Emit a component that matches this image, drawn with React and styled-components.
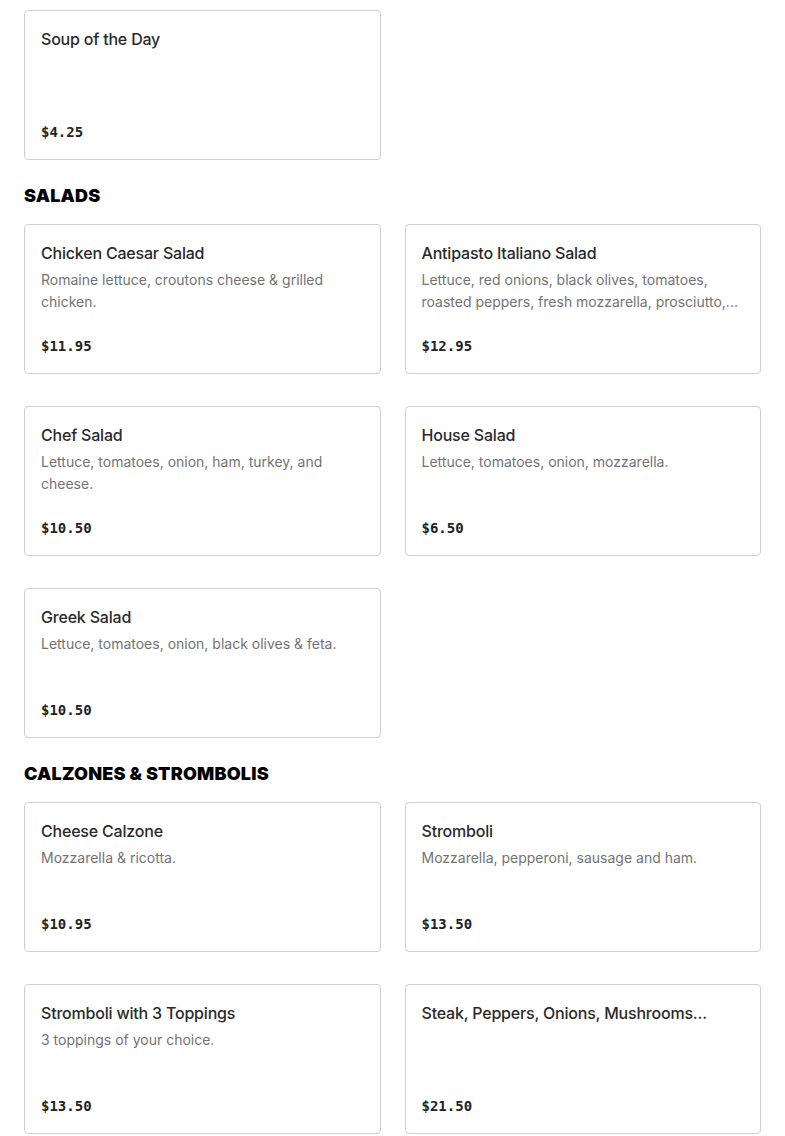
import styled, { createGlobalStyle } from "styled-components";

const GlobalStyle = createGlobalStyle`
  body {
    margin: 0;
    background: #ffffff;
    font-family: Inter, "Noto Sans", sans-serif;
  }
`;

const menu = [
  {
    title: null,
    items: [{ name: "Soup of the Day", price: "$4.25" }],
  },
  {
    title: "SALADS",
    items: [
      { name: "Chicken Caesar Salad", desc: "Romaine lettuce, croutons cheese & grilled chicken.", price: "$11.95" },
      { name: "Antipasto Italiano Salad", desc: "Lettuce, red onions, black olives, tomatoes, roasted peppers, fresh mozzarella, prosciutto,...", price: "$12.95" },
      { name: "Chef Salad", desc: "Lettuce, tomatoes, onion, ham, turkey, and cheese.", price: "$10.50" },
      { name: "House Salad", desc: "Lettuce, tomatoes, onion, mozzarella.", price: "$6.50" },
      { name: "Greek Salad", desc: "Lettuce, tomatoes, onion, black olives & feta.", price: "$10.50" },
    ],
  },
  {
    title: "CALZONES & STROMBOLIS",
    items: [
      { name: "Cheese Calzone", desc: "Mozzarella & ricotta.", price: "$10.95" },
      { name: "Stromboli", desc: "Mozzarella, pepperoni, sausage and ham.", price: "$13.50" },
      { name: "Stromboli with 3 Toppings", desc: "3 toppings of your choice.", price: "$13.50" },
      { name: "Steak, Peppers, Onions, Mushrooms...", price: "$21.50" },
    ],
  },
];

const Page = styled.div`
  padding: 10px 24px 24px;
`;

const SectionTitle = styled.h2`
  margin: 24px 0 16px;
  font-family: Inter, "Liberation Sans", sans-serif;
  font-size: 18px;
  line-height: 24px;
  font-weight: 900;
  color: #000;
  letter-spacing: 0.2px;
`;

const Grid = styled.div`
  display: grid;
  grid-template-columns: 1fr 1fr;
  column-gap: 24px;
  row-gap: 32px;
`;

const Card = styled.div`
  height: 150px;
  box-sizing: border-box;
  border: 1px solid #cfcfcf;
  border-radius: 4px;
  padding: 16px;
  display: flex;
  flex-direction: column;
  min-width: 0;
`;

const Name = styled.div`
  font-size: 16px;
  line-height: 24px;
  font-weight: 500;
  letter-spacing: -0.2px;
  color: #2a2a2a;
`;

const Desc = styled.div`
  margin-top: 4px;
  font-size: 14px;
  line-height: 22px;
  color: #737373;
`;

const Price = styled.div`
  margin-top: auto;
  font-family: "DejaVu Sans Mono", "Liberation Mono", monospace;
  font-size: 14px;
  line-height: 22px;
  font-weight: 700;
  color: #222;
`;

export default function App() {
  return (
    <Page>
      <GlobalStyle />
      {menu.map((section, i) => (
        <section key={i}>
          {section.title && <SectionTitle>{section.title}</SectionTitle>}
          <Grid>
            {section.items.map((item) => (
              <Card key={item.name}>
                <Name>{item.name}</Name>
                {item.desc && <Desc>{item.desc}</Desc>}
                <Price>{item.price}</Price>
              </Card>
            ))}
          </Grid>
        </section>
      ))}
    </Page>
  );
}
